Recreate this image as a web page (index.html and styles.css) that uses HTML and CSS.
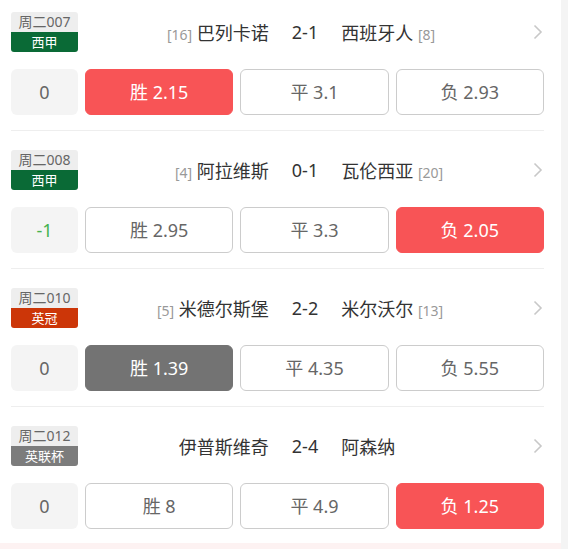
FILE: index.html
```html
<!DOCTYPE html>
<html lang="zh-CN">
<head>
<meta charset="UTF-8">
<meta name="viewport" content="width=device-width, initial-scale=1.0">
<title>竞彩足球</title>
<link rel="stylesheet" href="styles.css">
</head>
<body>
    <div class="page">
        <div class="list">
            <div class="match">
                <div class="match-head">
                    <div class="tag">
                        <div class="tag-no">周二007</div>
                        <div class="tag-league league-green">西甲</div>
                    </div>
                    <div class="teams">
                        <div class="home"><span class="rank">[16]</span> 巴列卡诺</div>
                        <div class="score">2-1</div>
                        <div class="away">西班牙人 <span class="rank">[8]</span></div>
                    </div>
                    <svg class="arrow" width="10" height="16" viewBox="0 0 10 16"><path d="M1.5 1.5 L8 8 L1.5 14.5" fill="none" stroke="#c8c8c8" stroke-width="1.6"/></svg>
                </div>
                <div class="odds">
                    <div class="handicap">0</div>
                    <div class="btn btn-red">胜 2.15</div>
                    <div class="btn">平 3.1</div>
                    <div class="btn">负 2.93</div>
                </div>
            </div>

            <div class="match">
                <div class="match-head">
                    <div class="tag">
                        <div class="tag-no">周二008</div>
                        <div class="tag-league league-green">西甲</div>
                    </div>
                    <div class="teams">
                        <div class="home"><span class="rank">[4]</span> 阿拉维斯</div>
                        <div class="score">0-1</div>
                        <div class="away">瓦伦西亚 <span class="rank">[20]</span></div>
                    </div>
                    <svg class="arrow" width="10" height="16" viewBox="0 0 10 16"><path d="M1.5 1.5 L8 8 L1.5 14.5" fill="none" stroke="#c8c8c8" stroke-width="1.6"/></svg>
                </div>
                <div class="odds">
                    <div class="handicap handicap-green">-1</div>
                    <div class="btn">胜 2.95</div>
                    <div class="btn">平 3.3</div>
                    <div class="btn btn-red">负 2.05</div>
                </div>
            </div>

            <div class="match">
                <div class="match-head">
                    <div class="tag">
                        <div class="tag-no">周二010</div>
                        <div class="tag-league league-orange">英冠</div>
                    </div>
                    <div class="teams">
                        <div class="home"><span class="rank">[5]</span> 米德尔斯堡</div>
                        <div class="score">2-2</div>
                        <div class="away">米尔沃尔 <span class="rank">[13]</span></div>
                    </div>
                    <svg class="arrow" width="10" height="16" viewBox="0 0 10 16"><path d="M1.5 1.5 L8 8 L1.5 14.5" fill="none" stroke="#c8c8c8" stroke-width="1.6"/></svg>
                </div>
                <div class="odds">
                    <div class="handicap">0</div>
                    <div class="btn btn-gray">胜 1.39</div>
                    <div class="btn">平 4.35</div>
                    <div class="btn">负 5.55</div>
                </div>
            </div>

            <div class="match">
                <div class="match-head">
                    <div class="tag">
                        <div class="tag-no">周二012</div>
                        <div class="tag-league league-gray">英联杯</div>
                    </div>
                    <div class="teams">
                        <div class="home">伊普斯维奇</div>
                        <div class="score">2-4</div>
                        <div class="away">阿森纳</div>
                    </div>
                    <svg class="arrow" width="10" height="16" viewBox="0 0 10 16"><path d="M1.5 1.5 L8 8 L1.5 14.5" fill="none" stroke="#c8c8c8" stroke-width="1.6"/></svg>
                </div>
                <div class="odds">
                    <div class="handicap">0</div>
                    <div class="btn">胜 8</div>
                    <div class="btn">平 4.9</div>
                    <div class="btn btn-red">负 1.25</div>
                </div>
            </div>
        </div>
        <div class="footer-strip"></div>
    </div>
</body>
</html>
```

FILE: styles.css
```css
body {
    margin: 0;
    background-color: #f4f4f4;
    font-family: "Noto Sans", "Noto Sans CJK SC", sans-serif;
    color: #333;
}

.page {
    width: 561px;
    background-color: #fff;
}

.list {
    padding: 0 17px 0 11px;
}

.match {
    padding: 19px 0 15px;
    border-bottom: 1px solid #eee;
}

.match:first-child {
    padding-top: 12px;
}

.match:last-child {
    border-bottom: none;
    padding-bottom: 14px;
}

.match-head {
    display: flex;
    align-items: center;
}

.tag {
    width: 67px;
    height: 40px;
    border-radius: 3px;
    overflow: hidden;
    font-size: 13px;
    text-align: center;
    flex-shrink: 0;
}

.tag-no {
    height: 20px;
    line-height: 20px;
    background-color: #eee;
    color: #666;
    font-size: 14px;
}

.tag-league {
    height: 20px;
    line-height: 20px;
    color: #fff;
}

.league-green {
    background-color: #0a6a36;
}

.league-orange {
    background-color: #cc3608;
}

.league-gray {
    background-color: #7c7c7c;
}

.teams {
    flex: 1;
    display: grid;
    grid-template-columns: 1fr auto 1fr;
    align-items: center;
    font-size: 18px;
    color: #333;
}

.home {
    text-align: right;
}

.away {
    text-align: left;
}

.score {
    padding: 0 23px;
}

.rank {
    font-size: 14px;
    color: #999;
}

.arrow {
    width: 10px;
    margin: 0 1px 0 1px;
    flex-shrink: 0;
}

.odds {
    display: flex;
    gap: 7px;
    margin-top: 17px;
}

.handicap {
    width: 67px;
    height: 46px;
    line-height: 46px;
    border-radius: 6px;
    background-color: #f4f4f4;
    color: #666;
    font-size: 18px;
    text-align: center;
    flex-shrink: 0;
}

.handicap-green {
    color: #45b34f;
}

.btn {
    flex: 1;
    height: 46px;
    line-height: 44px;
    box-sizing: border-box;
    border: 1px solid #ccc;
    border-radius: 6px;
    color: #666;
    font-size: 18px;
    text-align: center;
}

.btn-red {
    background-color: #f85456;
    border-color: #f85456;
    color: #fff;
}

.btn-gray {
    background-color: #737373;
    border-color: #737373;
    color: #fff;
}

.footer-strip {
    height: 10px;
    background-color: #fdf2f2;
}
```
